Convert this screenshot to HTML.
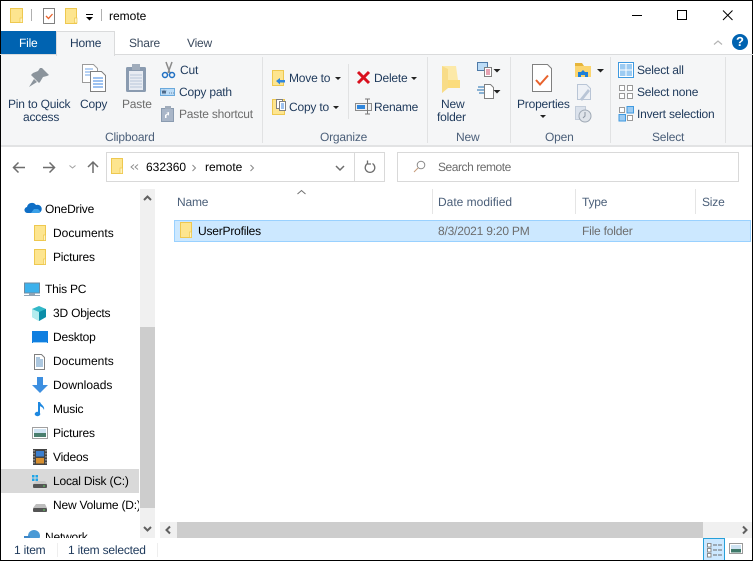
<!DOCTYPE html>
<html><head><meta charset="utf-8"><style>
html,body{margin:0;padding:0;background:#fff}
#w{position:relative;width:753px;height:561px;overflow:hidden;background:#fff;font:12px/16px "Liberation Sans",sans-serif;color:#000;text-rendering:geometricPrecision}
.t{position:absolute;white-space:nowrap;line-height:16px;letter-spacing:-.2px}
.z{letter-spacing:0}
.g{color:#6d6d6d}.d{color:#1e395b}.h{color:#4c607a}
.b{position:absolute}
svg{position:absolute;overflow:visible}
</style></head><body><div id="w">
<!-- window borders -->
<div class="b" style="left:0;top:0;width:753px;height:1px;background:#000"></div>
<div class="b" style="left:0;top:0;width:1px;height:561px;background:#000"></div>
<div class="b" style="left:752px;top:0;width:1px;height:561px;background:#000"></div>
<div class="b" style="left:0;top:560px;width:753px;height:1px;background:#000"></div>

<!-- title bar -->
<svg style="left:0;top:0" width="753" height="32">
<g><rect x="10.500" y="8.500" width="12" height="14" fill="#fde58f" stroke="#eec84f"/><rect x="20" y="18" width="2.500" height="4.500" fill="#fff3c0" stroke="#eec84f" stroke-width=".7"/></g>
<rect x="31" y="9" width="1" height="12" fill="#b0b0b0"/>
<rect x="43.500" y="8.500" width="11" height="15" fill="#fff" stroke="#808080"/><path d="M46 16l2.500 2.500 4-4.500" fill="none" stroke="#e8622c" stroke-width="1.300"/>
<g><rect x="65.500" y="8.500" width="11" height="15" fill="#fde58f" stroke="#eec84f"/><rect x="74.500" y="18" width="2.500" height="5" fill="#fff3c0" stroke="#eec84f" stroke-width=".7"/></g>
<rect x="86" y="14" width="7" height="1" fill="#000"/><path d="M86 17h7l-3.500 3.500z" fill="#000"/>
<rect x="101" y="9" width="1" height="12" fill="#b0b0b0"/>
<rect x="632" y="15" width="10" height="1" fill="#000"/>
<rect x="677.500" y="10.500" width="9" height="9" fill="none" stroke="#000"/>
<path d="M723 10.500l9.500 9.500M732.500 10.500l-9.500 9.500" stroke="#000" stroke-width="1" fill="none"/>
</svg>
<div class="t z" style="left:109px;top:8px">remote</div>

<!-- tabs -->
<div class="b" style="left:1px;top:31px;width:55px;height:23px;background:#0063b1"></div>
<div class="t" style="left:19px;top:35px;color:#fff">File</div>
<div class="b" style="left:0;top:54px;width:753px;height:1px;background:#dadbdc"></div>
<div class="b" style="left:1px;top:55px;width:751px;height:90px;background:#f5f6f7"></div>
<div class="b" style="left:1px;top:145px;width:751px;height:2px;background:#e2e3e4"></div>
<div class="b" style="left:56px;top:31px;width:57px;height:24px;background:#f5f6f7;border:1px solid #dadbdc;border-bottom:0;box-sizing:content-box"></div>
<div class="t" style="left:70px;top:35px;color:#1e395b">Home</div>
<div class="t" style="left:129px;top:35px;color:#3b4a5e">Share</div>
<div class="t" style="left:187px;top:35px;color:#3b4a5e">View</div>

<!-- help/collapse -->
<svg style="left:0;top:0" width="753" height="60">
<path d="M714 44.500l4-3.500 4 3.500" fill="none" stroke="#b4b4b4" stroke-width="1.200"/>
<circle cx="740" cy="42" r="8" fill="#0063b1"/>
</svg>
<div class="t z" style="left:736px;top:34px;color:#fff;font-weight:bold;font-size:13px">?</div>

<!-- ribbon group separators -->
<div class="b" style="left:262px;top:57px;width:1px;height:86px;background:#e1e2e3"></div>
<div class="b" style="left:427px;top:57px;width:1px;height:86px;background:#e1e2e3"></div>
<div class="b" style="left:510px;top:57px;width:1px;height:86px;background:#e1e2e3"></div>
<div class="b" style="left:610px;top:57px;width:1px;height:86px;background:#e1e2e3"></div>
<div class="b" style="left:725px;top:57px;width:1px;height:86px;background:#e1e2e3"></div>
<div class="b" style="left:348px;top:64px;width:1px;height:55px;background:#e1e2e3"></div>

<!-- ribbon icons -->
<svg style="left:0;top:0" width="753" height="150">
<!-- pin -->
<path d="M42 68l7 7-2 1-4 1-3 5-1 1-8-8 2-2 5-2 2-3z" fill="#8b949c"/><path d="M34 79l-5 8 8-5z" fill="#8b949c"/>
<!-- copy -->
<path d="M82.500 64.500h11l4 4v14h-15z" fill="#fff" stroke="#9b9b9b"/>
<path d="M85 69h8M85 72h10M85 75h10" stroke="#6fa6e8"/>
<path d="M90.500 71.500h11l4 4v16h-15z" fill="#fff" stroke="#808080"/>
<path d="M93 78h10M93 81h10M93 84h10M93 87h10" stroke="#3e86e0"/>
<!-- paste -->
<rect x="126.500" y="67.500" width="19" height="24" rx="1" fill="#8a9bb0" stroke="#8a9bb0"/>
<rect x="129" y="71" width="14" height="19" fill="#e8ecf3"/>
<path d="M130 75h12M130 78h12M130 81h12M130 84h12M130 87h12" stroke="#b8c6da"/>
<rect x="132" y="64" width="8" height="6" fill="#a0acbb"/>
<!-- cut -->
<path d="M166 62l4 11M172 62l-4 11" stroke="#8a8a8a" stroke-width="1.500"/>
<circle cx="165" cy="75" r="2.500" fill="none" stroke="#1f6fc2" stroke-width="1.500"/><circle cx="172" cy="75" r="2.500" fill="none" stroke="#1f6fc2" stroke-width="1.500"/>
<!-- copy path -->
<rect x="160.500" y="88.500" width="14" height="7" fill="#bcdcf7" stroke="#6aa9dc"/><path d="M162 90.500l1 3 1-3 1 3 1-3M169 93h.7M171 93h.7M173 93h.7" stroke="#1e395b" stroke-width=".7" fill="none"/>
<!-- paste shortcut -->
<rect x="161.500" y="108.500" width="12" height="13" fill="#a9b6c8" stroke="#8a9bb0"/><rect x="165" y="106" width="6" height="3" fill="#a0acbb"/><path d="M165 118v-3l3-2h-2l3-1v4l-1-1.500-1.500 1v2.500z" fill="#fff"/>
<!-- move to -->
<rect x="272.500" y="70.500" width="11" height="15" fill="#fde58f" stroke="#eec84f"/><path d="M276 81l4-3v2h5v2.500h-5v2z" fill="#2f86dc"/>
<!-- copy to -->
<rect x="272.500" y="99.500" width="12" height="15" fill="#fde58f" stroke="#eec84f"/><rect x="276.500" y="99.500" width="6" height="9" fill="#fff" stroke="#808080"/><rect x="279.500" y="101.500" width="6" height="9" fill="#fff" stroke="#808080"/><path d="M281 104h3M281 106h3M281 108h3" stroke="#3e86e0"/>
<!-- delete -->
<path d="M358 72l11 11M369 72l-11 11" stroke="#d9101e" stroke-width="3" fill="none"/>
<!-- rename -->
<rect x="355.500" y="103.500" width="16" height="7" fill="#eef0f2" stroke="#8a8a8a"/><rect x="357" y="105" width="8" height="4" fill="#2f86dc"/><path d="M365 99h5M367.500 99v15M365 114h5" stroke="#777" fill="none"/>
<!-- new folder -->
<path d="M442 66h14l2 14h2v8h-12l-6 5z" fill="#fce9a8"/><path d="M442 66l6 3v19l-6 5z" fill="#f8dc88"/><path d="M448 80h12v8h-12z" fill="#fbdc7c"/>
<!-- new item -->
<rect x="477.500" y="62.500" width="10" height="8" fill="#bcdcf7" stroke="#4e7aa8"/><rect x="484.500" y="67.500" width="7" height="9" fill="#fff" stroke="#808080"/><path d="M486 70h4M486 72h4M486 74h4" stroke="#c46"/>
<path d="M493.500 69h7l-3.500 3.500z" fill="#222"/>
<path d="M484.500 84.500h6l3 3v11h-9z" fill="#fff" stroke="#808080"/><path d="M478 87h6M477 90h7M479 93h5" stroke="#1f6fb2"/>
<path d="M493.500 90h7l-3.500 3.500z" fill="#222"/>
<!-- properties -->
<path d="M532.500 64.500h15l4 4v23h-19z" fill="#fff" stroke="#808080"/><path d="M536 80l4 4.500 8-9" fill="none" stroke="#e8622c" stroke-width="2"/>
<path d="M540 115h6l-3 3z" fill="#222"/>
<!-- open -->
<path d="M575 63h7l2 3h6v11h-15z" fill="#e6b53a"/><rect x="575" y="66" width="16" height="11" fill="#fbd56f"/><path d="M578 77v-5h3l2-2 2 2h3v5h-3v-2h-4v2z" fill="#1e7fd8"/>
<path d="M597 69h7l-3.500 3.500z" fill="#222"/>
<!-- edit -->
<path d="M577.500 84.500h9l4 4v11h-13z" fill="#eef1f6" stroke="#b9c5d6"/><path d="M580 99l8-10 2 2-8 10z" fill="#b9c5d6"/>
<!-- history -->
<rect x="575.500" y="106.500" width="10" height="13" fill="#dbe2ec" stroke="#c2ccd9"/><circle cx="585" cy="116" r="6" fill="#dfe4ea" stroke="#9fa9b5"/><path d="M585 112v4l-2 2" stroke="#8c96a3" fill="none"/>
<!-- select all -->
<rect x="618.500" y="62.500" width="15" height="15" fill="#fff" stroke="#3f9ae0"/><rect x="620" y="64" width="5.500" height="5.500" fill="#9ccbf2"/><rect x="626.500" y="64" width="5.500" height="5.500" fill="#9ccbf2"/><rect x="620" y="70.500" width="5.500" height="5.500" fill="#9ccbf2"/><rect x="626.500" y="70.500" width="5.500" height="5.500" fill="#9ccbf2"/>
<!-- select none -->
<g fill="#fff" stroke="#9a9a9a"><rect x="619.500" y="85.500" width="5" height="5"/><rect x="627.500" y="85.500" width="5" height="5"/><rect x="619.500" y="93.500" width="5" height="5"/><rect x="627.500" y="93.500" width="5" height="5"/></g>
<!-- invert -->
<rect x="619.500" y="107.500" width="5" height="5" fill="#fff" stroke="#9a9a9a"/><rect x="627" y="106.500" width="6.500" height="6.500" fill="#9ccbf2" stroke="#3f9ae0"/><rect x="619" y="114.500" width="6.500" height="6.500" fill="#9ccbf2" stroke="#3f9ae0"/><rect x="627.500" y="115.500" width="5" height="5" fill="#fff" stroke="#9a9a9a"/>
<!-- small carets -->
<path d="M335 77h6l-3 3zM333 106h6l-3 3zM411 77h6l-3 3z" fill="#222"/>
</svg>

<!-- ribbon text -->
<div class="t d" style="left:8px;top:96px">Pin to Quick</div>
<div class="t d" style="left:23px;top:109px">access</div>
<div class="t d" style="left:80px;top:96px">Copy</div>
<div class="t g" style="left:122px;top:96px">Paste</div>
<div class="t d" style="left:180px;top:62px">Cut</div>
<div class="t d" style="left:179px;top:84px">Copy path</div>
<div class="t g" style="left:179px;top:106px">Paste shortcut</div>
<div class="t d" style="left:289px;top:70px">Move to</div>
<div class="t d" style="left:289px;top:99px">Copy to</div>
<div class="t d" style="left:374px;top:70px">Delete</div>
<div class="t d" style="left:374px;top:99px">Rename</div>
<div class="t d" style="left:441px;top:96px">New</div>
<div class="t d" style="left:437px;top:109px">folder</div>
<div class="t d" style="left:517px;top:96px">Properties</div>
<div class="t d" style="left:637px;top:62px">Select all</div>
<div class="t d" style="left:637px;top:84px">Select none</div>
<div class="t d" style="left:637px;top:106px">Invert selection</div>
<div class="t h" style="left:105px;top:129px">Clipboard</div>
<div class="t h" style="left:320px;top:129px">Organize</div>
<div class="t h" style="left:456px;top:129px">New</div>
<div class="t h" style="left:545px;top:129px">Open</div>
<div class="t h" style="left:652px;top:129px">Select</div>

<!-- nav bar -->
<div class="b" style="left:106px;top:152px;width:279px;height:30px;box-sizing:border-box;border:1px solid #d9d9d9"></div>
<div class="b" style="left:354px;top:152px;width:1px;height:30px;background:#d9d9d9"></div>
<div class="b" style="left:397px;top:152px;width:342px;height:30px;box-sizing:border-box;border:1px solid #d9d9d9"></div>
<svg style="left:0;top:145px" width="753" height="40">
<path d="M25 22.500H14M18.500 17.500l-5 5 5 5" fill="none" stroke="#6d6d6d" stroke-width="1.500"/>
<path d="M43 22.500h11M49.500 17.500l5 5-5 5" fill="none" stroke="#6d6d6d" stroke-width="1.500"/>
<path d="M69.500 20.500l3 2.500 3-2.500" fill="none" stroke="#a0a0a0"/>
<path d="M93 28V17M88 22l5-5 5 5" fill="none" stroke="#6d6d6d" stroke-width="1.500"/>
<rect x="111.500" y="13.500" width="11" height="15" fill="#fde58f" stroke="#eec84f"/><rect x="120" y="23" width="2.500" height="5.500" fill="#fff3c0" stroke="#eec84f" stroke-width=".7"/>
<path d="M134 19.500l-3 2.500 3 2.500M138 19.500l-3 2.500 3 2.500" fill="none" stroke="#8a8a8a" stroke-width=".9"/>
<path d="M192.500 20l3 3-3 3M250.500 20l3 3-3 3" fill="none" stroke="#888"/>
<path d="M336 21l4 4 4-4" fill="none" stroke="#6d6d6d" stroke-width="1.500"/>
<path d="M367.500 18.500a4.800 4.800 0 1 0 5 0M367.500 15.500v3.500h3.500" fill="none" stroke="#6d6d6d" stroke-width="1.300"/>
<circle cx="421" cy="20" r="3.800" fill="none" stroke="#8a8a8a"/><path d="M418 23l-4 4" stroke="#c79a7a" stroke-width="1"/>
</svg>
<div class="t z" style="left:146px;top:159px">632360</div>
<div class="t z" style="left:205px;top:159px">remote</div>
<div class="t g" style="left:438px;top:159px;letter-spacing:-.45px">Search remote</div>

<!-- nav scrollbar -->
<div class="b" style="left:140px;top:189px;width:15px;height:349px;background:#f0f0f0"></div>
<div class="b" style="left:140px;top:327px;width:15px;height:181px;background:#cdcdcd"></div>
<svg style="left:140px;top:189px" width="16" height="349">
<path d="M4 12l3.500-3.500 3.500 3.500" transform="translate(0 -1)" fill="none" stroke="#606060" stroke-width="2"/>
<path d="M4 338l3.500 3.500 3.500-3.500" fill="none" stroke="#606060" stroke-width="2"/>
</svg>

<!-- nav tree -->
<div class="b" style="left:1px;top:469px;width:138px;height:24px;background:#d9d9d9"></div>
<div style="position:absolute;left:0;top:190px;width:139px;height:348px;overflow:hidden">
<div class="t" style="left:45px;top:11px">OneDrive</div>
<div class="t z" style="left:53px;top:35px">Documents</div>
<div class="t" style="left:53px;top:59px">Pictures</div>
<div class="t" style="left:45px;top:91px">This PC</div>
<div class="t" style="left:53px;top:115px">3D Objects</div>
<div class="t" style="left:53px;top:139px">Desktop</div>
<div class="t z" style="left:53px;top:163px">Documents</div>
<div class="t z" style="left:53px;top:187px">Downloads</div>
<div class="t" style="left:53px;top:211px">Music</div>
<div class="t" style="left:53px;top:235px">Pictures</div>
<div class="t" style="left:53px;top:259px">Videos</div>
<div class="t" style="left:53px;top:283px">Local Disk (C:)</div>
<div class="t" style="left:53px;top:307px">New Volume (D:)</div>
<div class="t" style="left:45px;top:339px">Network</div>
<svg style="left:0;top:-190px" width="139" height="560">
<!-- onedrive -->
<path d="M28 213a3 3 0 0 1-1-6 5 5 0 0 1 9-2 4 4 0 0 1 3 8z" fill="#0f6fc6"/><path d="M31 213l3-4 4 0 2 2a2 2 0 0 1-1 2z" fill="#3aa0e8"/>
<!-- folders -->
<g id="f1"><rect x="34.500" y="225.500" width="11" height="15" fill="#fde58f" stroke="#eec84f"/><rect x="43.500" y="235" width="2" height="5.500" fill="#fff3c0" stroke="#eec84f" stroke-width=".7"/></g>
<rect x="34.500" y="249.500" width="11" height="15" fill="#fde58f" stroke="#eec84f"/><rect x="43.500" y="259" width="2" height="5.500" fill="#fff3c0" stroke="#eec84f" stroke-width=".7"/>
<!-- this pc -->
<rect x="24.500" y="283" width="15" height="10" fill="#3cb1ec" stroke="#6d8aa0"/><rect x="29" y="293" width="6" height="2" fill="#90a4b5"/><rect x="24" y="295" width="16" height="1" fill="#90a4b5"/>
<!-- 3d -->
<path d="M32 309l7-3 7 3v8l-7 4-7-4z" fill="#32b8c8"/><path d="M32 309l7 3v9l-7-4z" fill="#b4ecee"/><path d="M39 312l7-3v8l-7 4z" fill="#0c8ea8"/>
<!-- desktop -->
<rect x="32" y="331" width="16" height="12" fill="#0f7fe0"/><rect x="33" y="342" width="14" height="1" fill="#9fd0f5"/>
<!-- docs -->
<path d="M34.500 354.500h7l3 3v12h-10z" fill="#fff" stroke="#808080"/><path d="M36 358h4M36 360h7M36 362h7M36 364h7M36 366h7" stroke="#5a8fbf"/>
<!-- downloads -->
<path d="M37 377h6v8h5l-8 8-8-8h5z" fill="#3d8fe0"/>
<!-- music -->
<path d="M39 402v12" stroke="#1e88e0" stroke-width="2"/><ellipse cx="37.500" cy="414" rx="2.800" ry="2.200" fill="#1e88e0"/><path d="M40 402c1 3 5 4 4 8-1-3-3-3-4-4z" fill="#1e88e0"/>
<!-- pictures -->
<rect x="32.500" y="427.500" width="15" height="11" fill="#fff" stroke="#a0a0a0"/><rect x="34" y="429" width="12" height="5" fill="#cfe3f2"/><rect x="34" y="433" width="12" height="4" fill="#4a7f6e"/>
<!-- videos -->
<rect x="33" y="449" width="14" height="16" fill="#444"/><path d="M34 450v14M46 450v14" stroke="#ccc" stroke-dasharray="1.500 1.500"/><rect x="36" y="451" width="8" height="5.500" fill="#3b7fd0"/><rect x="36" y="458" width="8" height="5.500" fill="#d89030"/>
<!-- local disk -->
<g fill="#1fa5e8"><rect x="32" y="475" width="2.500" height="2.500"/><rect x="35.500" y="475" width="2.500" height="2.500"/><rect x="32" y="478.500" width="2.500" height="2.500"/><rect x="35.500" y="478.500" width="2.500" height="2.500"/></g>
<path d="M36 481h9l2 3H33z" fill="#c8c8c8"/><rect x="33" y="484" width="14" height="4" rx="1" fill="#555"/><rect x="43" y="485.500" width="2" height="1" fill="#5fd35f"/>
<!-- new vol -->
<path d="M36 504h9l2 4H33z" fill="#bdbdbd"/><rect x="33" y="508" width="14" height="4" rx="1" fill="#555"/><rect x="43" y="509.500" width="2" height="1" fill="#5fd35f"/>
<!-- network -->
<circle cx="34" cy="536" r="6" fill="#4a9ad6"/><rect x="24" y="536" width="6" height="4" fill="#3f87c7"/>
</svg>
</div>

<!-- headers -->
<div class="t h" style="left:177px;top:194px">Name</div>
<div class="t h z" style="left:438px;top:194px">Date modified</div>
<div class="t h" style="left:582px;top:194px">Type</div>
<div class="t h" style="left:702px;top:194px">Size</div>
<div class="b" style="left:432px;top:189px;width:1px;height:25px;background:#e5e5e5"></div>
<div class="b" style="left:575px;top:189px;width:1px;height:25px;background:#e5e5e5"></div>
<div class="b" style="left:695px;top:189px;width:1px;height:25px;background:#e5e5e5"></div>
<svg style="left:296px;top:188px" width="12" height="8"><path d="M1.500 6l4-3.500 4 3.500" fill="none" stroke="#707070"/></svg>

<!-- selected row -->
<div class="b" style="left:174px;top:220px;width:577px;height:22px;box-sizing:border-box;background:#cce8ff;border:1px solid #99d1ff"></div>
<svg style="left:0;top:0" width="200" height="245"><rect x="180.500" y="222.500" width="11" height="15" fill="#fde58f" stroke="#eec84f"/><rect x="189.500" y="232" width="2" height="5.500" fill="#fff3c0" stroke="#eec84f" stroke-width=".7"/></svg>
<div class="t" style="left:198px;top:223px">UserProfiles</div>
<div class="t g" style="left:438px;top:223px">8/3/2021 9:20 PM</div>
<div class="t g" style="left:582px;top:223px">File folder</div>

<!-- h scrollbar -->
<div class="b" style="left:160px;top:522px;width:592px;height:16px;background:#f0f0f0"></div>
<div class="b" style="left:177px;top:522px;width:526px;height:16px;background:#cdcdcd"></div>
<svg style="left:160px;top:522px" width="592" height="16">
<path d="M10 4.500L6.500 8l3.500 3.500" fill="none" stroke="#606060" stroke-width="2"/>
<path d="M583 4.500L586.500 8 583 11.500" fill="none" stroke="#606060" stroke-width="2"/>
</svg>

<!-- status -->
<div class="t" style="left:14px;top:542px;color:#1e395b">1 item</div>
<div class="t" style="left:68px;top:542px;color:#1e395b">1 item selected</div>
<div class="b" style="left:57px;top:543px;width:1px;height:14px;background:#eee"></div>
<div class="b" style="left:157px;top:543px;width:1px;height:14px;background:#eee"></div>
<div class="b" style="left:703px;top:538px;width:22px;height:22px;box-sizing:border-box;background:#cce8ff;border:1px solid #26a0da;border-bottom:0"></div>
<svg style="left:0;top:530px" width="753" height="31">
<g fill="#fff" stroke="#8a8a8a"><rect x="707.500" y="13.500" width="3.500" height="3.500"/><rect x="707.500" y="18.500" width="3.500" height="3.500"/><rect x="707.500" y="23.500" width="3.500" height="3.500"/></g>
<path d="M713 15h10M713 20h10M713 25h10" stroke="#6d6d6d" stroke-dasharray="4 1"/>
<rect x="729.500" y="13.500" width="13" height="10" fill="#fff" stroke="#9a9a9a"/><rect x="731" y="15" width="10" height="4" fill="#cfe3f2"/><rect x="731" y="19" width="10" height="3.500" fill="#3f7a6a"/>
</svg>
</div></body></html>
